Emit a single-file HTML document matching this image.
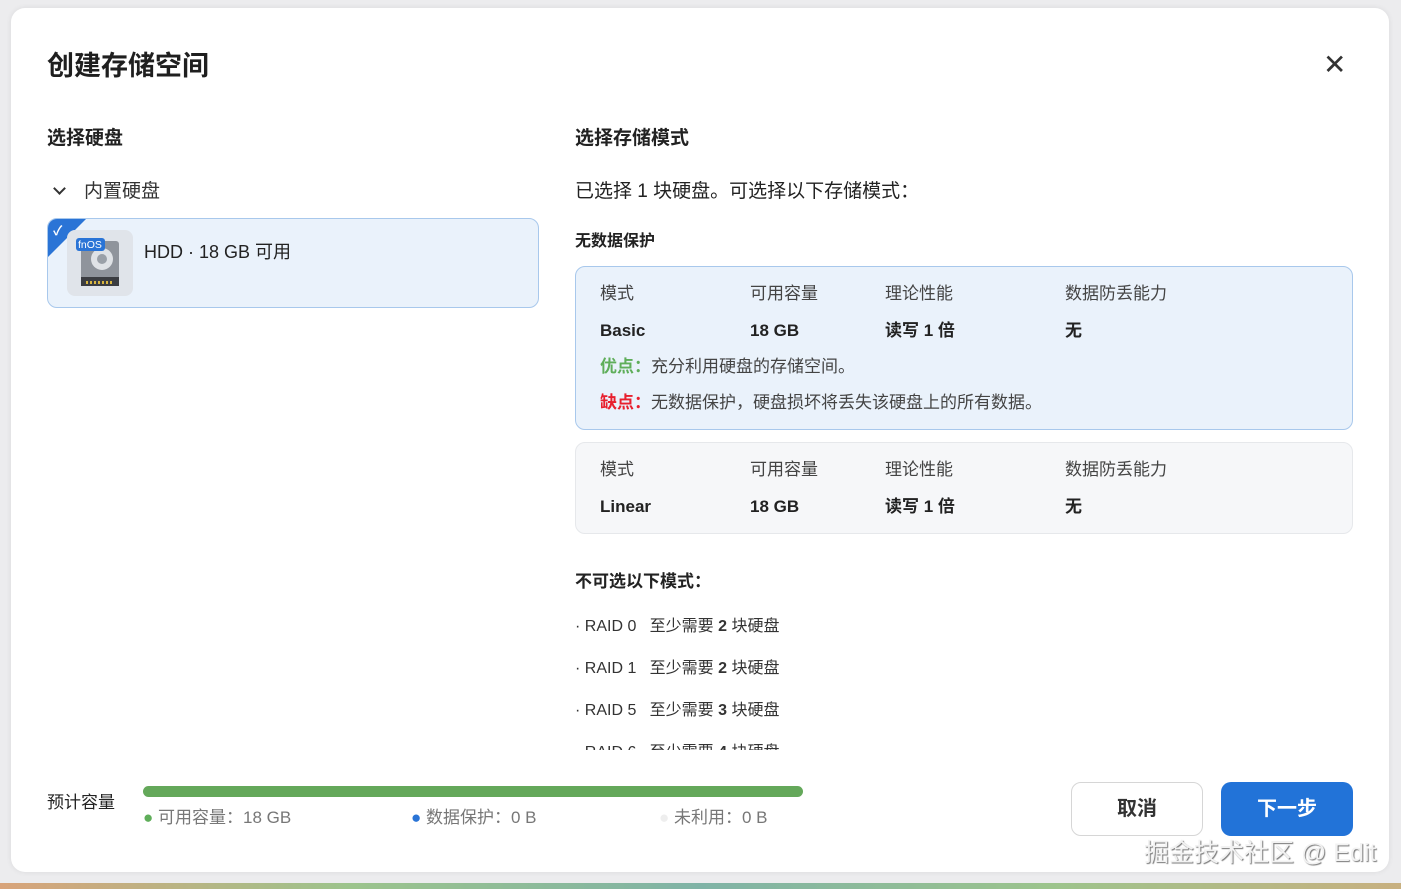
<!DOCTYPE html>
<html><head><meta charset="utf-8"><style>
*{box-sizing:border-box;margin:0;padding:0}
body{width:1401px;height:889px;overflow:hidden;background:#ececee;font-family:"Liberation Sans","Noto Sans CJK SC",sans-serif;color:#222;position:relative}
.strip{position:absolute;left:0;right:0;top:883px;height:6px;background:linear-gradient(90deg,#d8a37a,#9cc48c,#7fb3a6,#9cc48c,#c8b080)}
.dlg{position:absolute;left:11px;top:8px;width:1378px;height:864px;background:#fff;border-radius:14px;box-shadow:0 0 6px rgba(0,0,0,.08)}
.abs{position:absolute;line-height:22px;white-space:nowrap}
h1{position:absolute;left:36px;top:40px;font-size:27px;font-weight:700;color:#1f1f1f;line-height:36px}
.close{position:absolute;left:1312px;top:42px;font-size:28px;color:#333;line-height:30px}
.h2{font-size:19px;font-weight:700;color:#222}
.card{position:absolute;border-radius:10px}
.t16{font-size:17px}
.gray{color:#444}
.b{font-weight:700}
</style></head><body>
<div class="strip"></div>
<div class="dlg">
<h1>创建存储空间</h1>
<div class="close">✕</div>
<div class="abs h2" style="left:36px;top:120px">选择硬盘</div>
<div class="abs t16" style="left:40px;top:173px;font-size:19px;color:#333"><span style="display:inline-block;width:9px;height:9px;border-right:2px solid #333;border-bottom:2px solid #333;transform:rotate(45deg);margin:0 20px 4px 4px"></span>内置硬盘</div>
<div class="card" style="left:36px;top:210px;width:492px;height:90px;background:#eaf2fb;border:1px solid #a8c8ec;overflow:hidden">
 <div class="abs" style="left:0;top:0;width:0;height:0;border-top:38px solid #2a74d6;border-right:38px solid transparent"></div>
 <div class="abs" style="left:5px;top:1px;color:#fff;font-size:13px;font-weight:700">✓</div>
 <div class="abs" style="left:19px;top:11px;width:66px;height:66px;background:#e0e4ea;border-radius:8px"></div>
 <svg class="abs" style="left:28px;top:18px" width="50" height="54" viewBox="0 0 50 54">
  <rect x="5" y="4" width="38" height="44" rx="3" fill="#8f949c"/>
  <rect x="5" y="40" width="38" height="9" fill="#3b3d42"/>
  <g fill="#d8b540"><rect x="10" y="44" width="2" height="3"/><rect x="14" y="44" width="2" height="3"/><rect x="18" y="44" width="2" height="3"/><rect x="22" y="44" width="2" height="3"/><rect x="26" y="44" width="2" height="3"/><rect x="30" y="44" width="2" height="3"/><rect x="34" y="44" width="2" height="3"/></g>
  <circle cx="26" cy="22" r="11" fill="#dfe2e6"/><circle cx="26" cy="22" r="5" fill="#9aa0a8"/>
  <rect x="0" y="1" width="29" height="13" rx="3" fill="#2a74d6"/>
  <text x="2" y="11" font-size="10.5" fill="#fff" font-family="Liberation Sans">fnOS</text>
 </svg>
 <div class="abs" style="left:96px;top:22px;font-size:18px;color:#222">HDD · 18 GB 可用</div>
</div>

<div class="abs h2" style="left:564px;top:120px">选择存储模式</div>
<div class="abs" style="left:564px;top:173px;font-size:19px;color:#222">已选择 1 块硬盘。可选择以下存储模式：</div>
<div class="abs b" style="left:564px;top:223px;font-size:16px">无数据保护</div>
<div class="card" style="left:564px;top:258px;width:778px;height:164px;background:#eaf2fb;border:1px solid #a8c8ec">
 <div class="abs t16 gray" style="left:24px;top:16px">模式</div><div class="abs t16 gray" style="left:174px;top:16px">可用容量</div><div class="abs t16 gray" style="left:309px;top:16px">理论性能</div><div class="abs t16 gray" style="left:489px;top:16px">数据防丢能力</div>
 <div class="abs t16" style="left:24px;top:53px;font-weight:600">Basic</div><div class="abs t16" style="left:174px;top:53px;font-weight:600">18 GB</div><div class="abs t16 b" style="left:309px;top:53px">读写 1 倍</div><div class="abs t16 b" style="left:489px;top:53px">无</div>
 <div class="abs t16" style="left:24px;top:89px"><span class="b" style="color:#5fae5a">优点：</span><span class="gray">充分利用硬盘的存储空间。</span></div>
 <div class="abs t16" style="left:24px;top:125px"><span class="b" style="color:#e8202e">缺点：</span><span class="gray">无数据保护，硬盘损坏将丢失该硬盘上的所有数据。</span></div>
</div>
<div class="card" style="left:564px;top:434px;width:778px;height:92px;background:#f6f7f9;border:1px solid #e6e8eb">
 <div class="abs t16 gray" style="left:24px;top:16px">模式</div><div class="abs t16 gray" style="left:174px;top:16px">可用容量</div><div class="abs t16 gray" style="left:309px;top:16px">理论性能</div><div class="abs t16 gray" style="left:489px;top:16px">数据防丢能力</div>
 <div class="abs t16" style="left:24px;top:53px;font-weight:600">Linear</div><div class="abs t16" style="left:174px;top:53px;font-weight:600">18 GB</div><div class="abs t16 b" style="left:309px;top:53px">读写 1 倍</div><div class="abs t16 b" style="left:489px;top:53px">无</div>
</div>
<div class="abs b" style="left:564px;top:563px;font-size:17px">不可选以下模式：</div>
<div class="abs" style="left:564px;top:600px;width:300px;height:142px;overflow:hidden;font-size:16px;color:#333;line-height:42px">
 <div style="margin-top:-2px">· RAID 0&nbsp;&nbsp; 至少需要 <b>2</b> 块硬盘</div>
 <div>· RAID 1&nbsp;&nbsp; 至少需要 <b>2</b> 块硬盘</div>
 <div>· RAID 5&nbsp;&nbsp; 至少需要 <b>3</b> 块硬盘</div>
 <div>· RAID 6&nbsp;&nbsp; 至少需要 <b>4</b> 块硬盘</div>
</div>

<div class="abs" style="left:36px;top:784px;font-size:17px">预计容量</div>
<div class="abs" style="left:132px;top:778px;width:660px;height:11px;border-radius:6px;background:#64a85a"></div>
<div class="abs" style="left:132px;top:799px;font-size:17px;color:#777"><span style="color:#5fae5a">●</span> 可用容量：18 GB</div>
<div class="abs" style="left:400px;top:799px;font-size:17px;color:#777"><span style="color:#2a74d6">●</span> 数据保护：0 B</div>
<div class="abs" style="left:648px;top:799px;font-size:17px;color:#777"><span style="color:#eee">●</span> 未利用：0 B</div>
<div class="abs" style="left:1060px;top:774px;width:132px;height:54px;border:1px solid #d6d6d6;border-radius:10px;text-align:center;line-height:52px;font-size:20px;font-weight:700;color:#333">取消</div>
<div class="abs" style="left:1210px;top:774px;width:132px;height:54px;background:#2273d8;border-radius:10px;text-align:center;line-height:54px;font-size:20px;font-weight:700;color:#fff">下一步</div>
<div class="abs" style="left:1133px;top:830px;font-size:25px;line-height:30px;color:#f2f2f2;text-shadow:1px 1px 1px #777">掘金技术社区 @ Edit</div>
</div>
</body></html>
